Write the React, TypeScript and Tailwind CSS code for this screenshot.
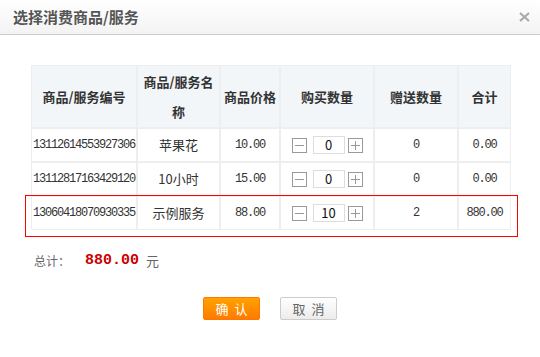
import React from "react"

interface Item {
  code: string
  name: string
  price: string
  qty: number
  gift: string
  total: string
}

const items: Item[] = [
  { code: "13112614553927306", name: "苹果花", price: "10.00", qty: 0, gift: "0", total: "0.00" },
  { code: "13112817163429120", name: "10小时", price: "15.00", qty: 0, gift: "0", total: "0.00" },
  { code: "13060418070930335", name: "示例服务", price: "88.00", qty: 10, gift: "2", total: "880.00" },
]

const cjk = "font-['Noto_Sans_CJK_SC','Noto_Sans',sans-serif]"
const mono = "font-['Liberation_Mono','Noto_Sans_CJK_SC',monospace] tracking-[-1.2px] text-[#222]"

function QtyBox({ value }: { value: number }) {
  return (
    <div className="flex items-center justify-center">
      <span className="relative w-[15px] h-[15px] border border-[#999] bg-white">
        <span className="absolute left-[2px] right-[2px] top-[6px] h-px bg-[#999]" />
      </span>
      <span
        className={`ml-[6px] w-[32px] h-[18px] border border-[#ddd] bg-white flex items-center justify-center text-[13px] text-[#111] ${cjk}`}
      >
        {value}
      </span>
      <span className="relative ml-[3px] w-[15px] h-[15px] border border-[#999] bg-white">
        <span className="absolute left-[2px] right-[2px] top-[6px] h-px bg-[#999]" />
        <span className="absolute top-[2px] bottom-[2px] left-[6px] w-px bg-[#999]" />
      </span>
    </div>
  )
}

export default function App() {
  const th = `border border-[#eee] bg-[#f2f6f9] text-center align-middle text-[13px] font-bold text-[#333] leading-[30px] ${cjk}`
  const td = "border border-[#eee] text-center align-middle h-[34px] text-[12px] text-[#333]"

  return (
    <div className="w-[540px] h-[357px] bg-white overflow-hidden">
      {/* 标题栏 */}
      <div className="h-[35px] border-b border-[#ccc] bg-gradient-to-b from-white to-[#f3f3f3] flex items-center justify-between pl-[13px] pr-[10px]">
        <span className={`text-[15px] font-bold text-[#555] ${cjk}`}>选择消费商品/服务</span>
        <svg width="11" height="10" viewBox="0 0 11 10">
          <path d="M1 1 L10 9 M10 1 L1 9" stroke="#aaa" strokeWidth="2.2" />
        </svg>
      </div>

      <div className="relative ml-[31px] mt-[30px] w-[480px]">
        <table className="table-fixed w-[480px] border-separate border-spacing-0">
          <colgroup>
            <col className="w-[106px]" />
            <col className="w-[83px]" />
            <col className="w-[60px]" />
            <col className="w-[94px]" />
            <col className="w-[84px]" />
            <col className="w-[53px]" />
          </colgroup>
          <thead>
            <tr className="h-[63px]">
              <th className={th}>商品/服务编号</th>
              <th className={th}>
                商品/服务名
                <br />
                称
              </th>
              <th className={th}>商品价格</th>
              <th className={th}>购买数量</th>
              <th className={th}>赠送数量</th>
              <th className={th}>合计</th>
            </tr>
          </thead>
          <tbody>
            {items.map((it) => (
              <tr key={it.code}>
                <td className={`${td} ${mono} text-left pl-px`}>{it.code}</td>
                <td className={`${td} ${cjk} text-[13px]`}>{it.name}</td>
                <td className={`${td} ${mono}`}>{it.price}</td>
                <td className={td}>
                  <QtyBox value={it.qty} />
                </td>
                <td className={`${td} ${mono}`}>{it.gift}</td>
                <td className={`${td} ${mono}`}>{it.total}</td>
              </tr>
            ))}
          </tbody>
        </table>
        {/* 选中行 */}
        <div className="absolute left-[-6px] top-[130px] w-[493px] h-[42px] border border-[#f00] pointer-events-none" />
      </div>

      <div className="flex items-center h-[20px] mt-[21px] pl-[34px]">
        <span className={`text-[12px] text-[#666] ${cjk}`}>总计：</span>
        <span className="ml-[15px] text-[15px] font-bold text-[#c00] font-['Liberation_Mono',monospace]">880.00</span>
        <span className={`ml-[7px] text-[13px] text-[#666] ${cjk}`}>元</span>
      </div>

      <div className="flex justify-center gap-[20px] mt-[26px]">
        <button
          className={`w-[57px] h-[23px] rounded-[2px] border border-[#f70] bg-gradient-to-b from-[#ffa200] to-[#ff7a00] text-white text-[13px] tracking-[6px] indent-[6px] ${cjk}`}
        >
          确认
        </button>
        <button
          className={`w-[57px] h-[23px] rounded-[2px] border border-[#ccc] bg-gradient-to-b from-white to-[#ececec] text-[#666] text-[13px] tracking-[6px] indent-[6px] ${cjk}`}
        >
          取消
        </button>
      </div>
    </div>
  )
}
